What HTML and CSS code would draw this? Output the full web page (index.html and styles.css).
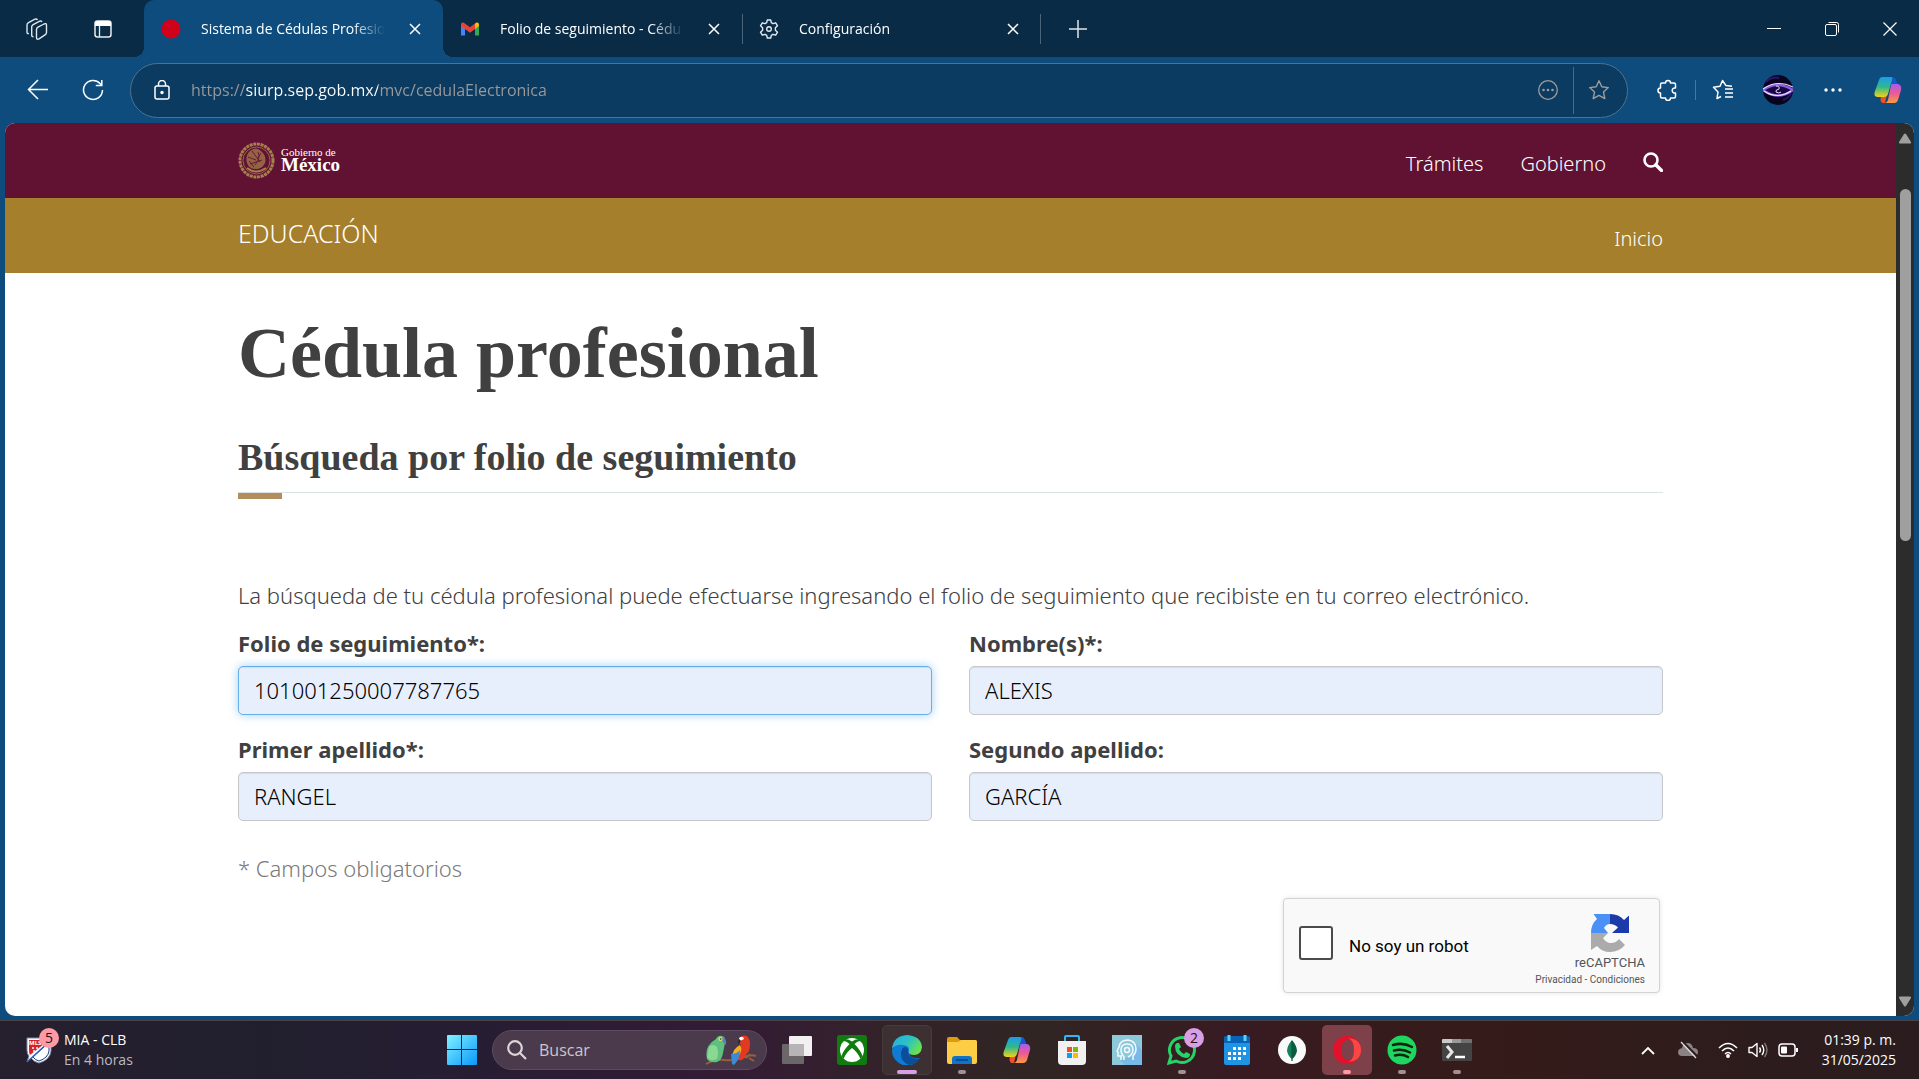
FILE: index.html
```html
<!DOCTYPE html>
<html lang="es">
<head>
<meta charset="utf-8">
<title>Sistema de Cédulas Profesionales</title>
<link rel="stylesheet" href="styles.css">
</head>
<body>
<div class="browser">
  <header class="tabstrip">
    <div class="tabstrip-tools">
      <button class="icon-btn" aria-label="Áreas de trabajo"><svg width="22" height="24" viewBox="0 0 22 24" fill="none" stroke="#dfe6ec" stroke-width="1.400" stroke-linejoin="round"><path d="M10.500 12.500q0-1.500 1.500-2.300l6-3.200q2.500-1 2.500 1v7.500q0 1.500-1.500 2.300l-6 4q-2.500 1.200-2.500-1z"/><path d="M7.500 19.500q-1.800.5-1.800-1.500v-8q0-1.500 1.500-2.300l6.500-3.500q1.500-.6 2.300.8M3 16.500Q1 17 1 15V8q0-1.500 1.500-2.300L9 2.200q1.500-.8 2.500.8"/></svg></button>
      <button class="icon-btn" aria-label="Acciones de pestañas"><svg width="20" height="20" viewBox="0 0 20 20"><rect x="2" y="2" width="16" height="16" rx="2.500" fill="none" stroke="#e8edf1" stroke-width="1.500"/><path d="M2 7V4q0-2 2-2h12q2 0 2 2v3z" fill="#fff"/><path d="M6.500 7v11" stroke="#e8edf1" stroke-width="1.300"/></svg></button>
    </div>
    <div class="tab tab-active">
      <svg width="20" height="20" viewBox="0 0 20 20"><circle cx="10" cy="10" r="9.500" fill="#d0021b"/></svg>
      <button class="tab-label">Sistema de Cédulas Profesio</button>
      <button class="close" aria-label="Cerrar pestaña"><svg width="12" height="12" viewBox="0 0 12 12" stroke="#fff" stroke-width="1.500"><path d="M1 1l10 10M11 1L1 11"/></svg></button>
    </div>
    <div class="tab">
      <svg width="20" height="20" viewBox="0 0 20 20"><path d="M1 5v11.500h4V9z" fill="#4285f4"/><path d="M19 5v11.500h-4V9z" fill="#34a853"/><path d="M15 4.500l1.500-1q2.500-.5 2.500 2V7l-4 3z" fill="#fbbc04"/><path d="M1 7V5.500q0-2.500 2.500-2L10 8.300l5-3.800V10l-5 3.800L5 10z" fill="#ea4335"/></svg>
      <button class="tab-label">Folio de seguimiento - Cédu</button>
      <button class="close" aria-label="Cerrar pestaña"><svg width="12" height="12" viewBox="0 0 12 12" stroke="#fff" stroke-width="1.500"><path d="M1 1l10 10M11 1L1 11"/></svg></button>
    </div>
    <div class="tab tab-line">
      <svg width="20" height="20" viewBox="0 0 20 20" fill="none" stroke="#e3e9ee" stroke-width="1.400" stroke-linejoin="round"><path d="M8.300 1h3.400l.6 2.700 1.700 1 2.700-.9 1.800 3-2.100 1.900v2.600l2.100 1.900-1.800 3-2.700-.9-1.700 1-.6 2.700H8.300l-.6-2.700-1.700-1-2.700.9-1.800-3 2.100-1.900V8.700L1.500 6.800l1.800-3 2.700.9 1.700-1z"/><circle cx="10" cy="10" r="2.300"/></svg>
      <button class="tab-label">Configuración</button>
      <button class="close" aria-label="Cerrar pestaña"><svg width="12" height="12" viewBox="0 0 12 12" stroke="#fff" stroke-width="1.500"><path d="M1 1l10 10M11 1L1 11"/></svg></button>
    </div>
    <div class="newtab"><button class="icon-btn" aria-label="Nueva pestaña"><svg width="18" height="18" viewBox="0 0 18 18" stroke="#dfe6ec" stroke-width="1.500"><path d="M9 0v18M0 9h18"/></svg></button></div>
    <div class="window-controls">
      <button aria-label="Minimizar"><svg width="14" height="14" viewBox="0 0 14 14" stroke="#fff"><path d="M0 6.500h14"/></svg></button>
      <button aria-label="Restaurar"><svg width="14" height="14" viewBox="0 0 14 14" fill="none" stroke="#fff"><rect x=".5" y="2.500" width="11" height="11" rx="1.500"/><path d="M3.500.5h8q2 0 2 2v8"/></svg></button>
      <button aria-label="Cerrar"><svg width="14" height="14" viewBox="0 0 14 14" stroke="#fff" stroke-width="1.200"><path d="M.5.5l13 13M13.500.5l-13 13"/></svg></button>
    </div>
  </header>

  <div class="toolbar">
    <button class="icon-btn" aria-label="Atrás"><svg width="22" height="22" viewBox="0 0 22 22" fill="none" stroke="#fff" stroke-width="1.500"><path d="M21 10.500H1.500M11 1l-9.500 9.500L11 20"/></svg></button>
    <button class="icon-btn" aria-label="Actualizar"><svg width="22" height="22" viewBox="0 0 22 22" fill="none" stroke="#fff" stroke-width="1.500"><path d="M20.500 11a9.500 9.500 0 1 1-2.500-6.500l1.500 1.500M19.800 1v5.500h-6"/></svg></button>
    <div class="address">
      <svg width="16" height="20" viewBox="0 0 16 20" fill="none" stroke="#fff" stroke-width="1.500"><rect x="1" y="6" width="14" height="13" rx="2"/><path d="M4.500 6V4a3.500 3.500 0 0 1 7 0v2"/><circle cx="8" cy="12.500" r="1" fill="#fff"/></svg>
      <input class="url" type="text" aria-label="Barra de direcciones" value="https://siurp.sep.gob.mx/mvc/cedulaElectronica">
      <button class="icon-btn" aria-label="Más acciones"><svg width="20" height="20" viewBox="0 0 20 20" fill="none" stroke="#a09c9b" stroke-width="1.300"><circle cx="10" cy="10" r="9.300"/><g fill="#a09c9b" stroke="none"><circle cx="5.500" cy="10" r="1.300"/><circle cx="10" cy="10" r="1.300"/><circle cx="14.500" cy="10" r="1.300"/></g></svg></button>
      <span class="address-rule"></span>
      <button class="icon-btn" aria-label="Agregar a favoritos"><svg width="22" height="22" viewBox="0 0 22 22" fill="none" stroke="#a09c9b" stroke-width="1.400" stroke-linejoin="round"><path d="M11 1.800l2.800 6 6.500.8-4.800 4.500 1.300 6.500L11 16.400l-5.800 3.200 1.300-6.500L1.700 8.600l6.500-.8z"/></svg></button>
    </div>
    <div class="toolbar-end">
      <button class="icon-btn" aria-label="Extensiones"><svg width="22" height="22" viewBox="0 0 22 22" fill="none" stroke="#fff" stroke-width="1.500" stroke-linejoin="round"><path d="M5 4h3.500a2.500 2.500 0 0 1 5 0H17q1.500 0 1.500 1.500V9a2.600 2.600 0 1 0 0 5v3.500q0 1.500-1.500 1.500h-3.500a2.500 2.500 0 0 1-5 0H5q-1.500 0-1.500-1.500V14a2.500 2.500 0 0 1 0-5V5.500Q3.500 4 5 4z"/></svg></button>
      <span class="toolbar-rule"></span>
      <button class="icon-btn" aria-label="Favoritos"><svg width="22" height="22" viewBox="0 0 22 22" fill="none" stroke="#fff" stroke-width="1.500" stroke-linejoin="round"><path d="M20 7.300l-6-.7L10.500 1.500 8 7.300l-6.500 1L6 13l-1 6.500 4-2"/><path d="M13 10h8M13 14h8M13 18h8"/></svg></button>
      <button class="icon-btn avatar-btn" aria-label="Perfil"><svg width="30" height="30" viewBox="0 0 30 30"><circle cx="15" cy="15" r="15" fill="#080420"/><path d="M3 7q6-6 13-4M20 25q6-2 8-7" stroke="#2a1470" stroke-width="2" fill="none"/><path d="M0 15q14-10 30 0Q15 26 0 15z" fill="#140a40" stroke="#8f5be6" stroke-width="2.400"/><path d="M0 14q14-10 30-2M1 16q13 9 27 0" fill="none" stroke="#efe2ff" stroke-width="1.100"/><path d="M13 11q4 0 3 3-4 1-3 3 3 2 5 0" stroke="#e8dcff" fill="none"/></svg></button>
      <button class="icon-btn" aria-label="Configuración y más"><svg width="18" height="4" viewBox="0 0 18 4" fill="#fff"><circle cx="2" cy="2" r="1.700"/><circle cx="9" cy="2" r="1.700"/><circle cx="16" cy="2" r="1.700"/></svg></button>
      <button class="icon-btn" aria-label="Copilot"><svg width="28" height="28" viewBox="0 0 28 28"><use href="#copilot"/></svg></button>
    </div>
  </div>

  <div class="viewport">
    <div class="page">
      <nav class="gob-bar">
        <div class="container">
          <a class="brand" href="#">
            <svg width="37" height="37" viewBox="0 0 37 37" fill="none" stroke="#a57f4c"><circle cx="18.500" cy="18.500" r="16.500" stroke-width="3" stroke-dasharray="3 .7"/><circle cx="18.500" cy="18.500" r="13.500" stroke-width=".8"/><path d="M12 9q6-5 11 0 6 5 4 12-3 6-9 6-7 0-9-6-2-7 3-12z" fill="#a57f4c" fill-opacity=".75" stroke="none"/><path d="M14 9l8 11M20 10q3 6-3 13M10 15l8 3M12 22l12-4M23 11l-3 5M11 19l5 6" stroke="#611232" stroke-width=".9"/><path d="M9 26q9 7 19 0" stroke-width="2"/></svg>
            <span class="brand-text"><small>Gobierno de</small><strong>México</strong></span>
          </a>
          <div class="gob-links">
            <a href="#">Trámites</a>
            <a href="#">Gobierno</a>
            <a class="gob-search" href="#" aria-label="Buscar"><svg width="20" height="20" viewBox="0 0 20 20" fill="none" stroke="#fff"><circle cx="8" cy="8" r="6.500" stroke-width="2.600"/><path d="M13 13l5.500 5.500" stroke-width="3.400" stroke-linecap="round"/></svg></a>
          </div>
        </div>
      </nav>
      <nav class="edu-bar">
        <div class="container">
          <a class="edu-name" href="#">EDUCACIÓN</a>
          <a class="edu-home" href="#">Inicio</a>
        </div>
      </nav>
      <main class="container content">
        <h1>Cédula profesional</h1>
        <h2>Búsqueda por folio de seguimiento</h2>
        <div class="accent"></div>
        <p class="intro">La búsqueda de tu cédula profesional puede efectuarse ingresando el folio de seguimiento que recibiste en tu correo electrónico.</p>
        <form class="form">
          <div class="field"><label for="folio">Folio de seguimiento*:</label><input class="is-focused" id="folio" type="text" value="101001250007787765"></div>
          <div class="field"><label for="nombre">Nombre(s)*:</label><input id="nombre" type="text" value="ALEXIS"></div>
          <div class="field"><label for="primer">Primer apellido*:</label><input id="primer" type="text" value="RANGEL"></div>
          <div class="field"><label for="segundo">Segundo apellido:</label><input id="segundo" type="text" value="GARCÍA"></div>
        </form>
        <p class="required">* Campos obligatorios</p>
        <div class="captcha">
          <input type="checkbox" id="robot"><label for="robot">No soy un robot</label>
          <div class="captcha-brand">
            <svg width="40" height="40" viewBox="0 0 40 40"><path d="M20 1v10q-4 0-6 4l4 5H1Q1 11 7 6L3.500 1z" fill="#4a90f5"/><path d="M20 1q9 0 14 6l5-4.500V20H22l6-5.500Q25 11 20 11z" fill="#1c3aa9"/><path d="M1 20h17l-5 5q3 5 8 5 5 0 8-4l6 6q-6 7-15 7-8 0-13-6l-6 4z" fill="#ababab"/></svg>
            <span class="captcha-name">reCAPTCHA</span>
            <span class="captcha-legal"><a href="#">Privacidad</a> - <a href="#">Condiciones</a></span>
          </div>
        </div>
      </main>
    </div>
    <div class="scrollbar" aria-hidden="true">
      <svg width="14" height="11" viewBox="0 0 14 11" fill="#9f9f9f"><path d="M6 1q1-1 2 0l5 8q.5 1.500-1 1.500H2Q.5 10.500 1 9z"/></svg>
      <div class="scroll-track"><div class="scroll-thumb"></div></div>
      <svg width="14" height="11" viewBox="0 0 14 11" fill="#9f9f9f"><path d="M6 10q1 1 2 0l5-8q.5-1.500-1-1.500H2Q.5.5 1 2z"/></svg>
    </div>
  </div>
</div>

<footer class="taskbar">
  <button class="widget">
    <span class="widget-icon">
      <svg width="28" height="28" viewBox="0 0 28 28"><path d="M1 2h24v13q-1 9-12 12Q8 26 5 22l-4 4 2-6Q1 18 1 14z" fill="#fff" stroke="#7c89a8"/><path d="M3 4h20L4 19Q3 17 3 14z" fill="#d8202c"/><path d="M23 6v9q-1 7-10 10-4-1-6-4z" fill="#fff" stroke="#1d3c78"/><path d="M1 26L24 5" stroke="#2a63ad" stroke-width="1.500"/><g fill="#fff"><circle cx="7" cy="12" r="1"/><circle cx="11" cy="12" r="1"/><circle cx="8" cy="15" r="1"/></g><text x="3" y="9" font-family="Open Sans, sans-serif" font-size="6" font-weight="700" fill="#fff">MLS</text></svg>
      <span class="badge badge-pink">5</span>
    </span>
    <span class="widget-text"><span>MIA - CLB</span><span class="muted">En 4 horas</span></span>
  </button>

  <div class="apps">
    <button class="app" aria-label="Inicio"><svg width="30" height="30" viewBox="0 0 30 30"><defs><linearGradient id="win" gradientUnits="userSpaceOnUse" x1="0" y1="0" x2="30" y2="30"><stop stop-color="#80f2ff"/><stop offset="1" stop-color="#0a98fb"/></linearGradient></defs><path d="M1 0h13v14H0V1q0-1 1-1zM15 0h14q1 0 1 1v13H15zM0 15h14v15H1q-1 0-1-1zM15 15h15v14q0 1-1 1H15z" fill="url(#win)"/></svg></button>
    <label class="search">
      <svg width="20" height="20" viewBox="0 0 20 20" fill="none" stroke="#ddd5da" stroke-width="2.200"><circle cx="8" cy="8" r="6.800"/><path d="M13 13l6 6"/></svg>
      <input type="text" placeholder="Buscar" aria-label="Buscar">
      <svg width="52" height="32" viewBox="0 0 52 32"><path d="M1 30q9-5 18-4 10 1 18-2 8-4 14-2M41 24l4-4M44 24l5 3" stroke="#9a5d40" stroke-width="2" fill="none"/><path d="M11 5q2-4 6-3 4 1 3 7-1 5-2 10-1 7-6 9-7 1-10-3-3-13 9-20z" fill="#5fbf80"/><path d="M4 13q4-4 8 0 2 6 0 12-7 3-10-2z" fill="#8bd893"/><path d="M17 3q5 1 4 8-3-2-4-5z" fill="#5882b8"/><circle cx="15.500" cy="5" r="2" fill="#f6dc4f"/><circle cx="15.700" cy="5" r=".8" fill="#222"/><path d="M34 5q3-5 8-3 5 5 2 15l-7 9q-5 1-5-3 0-7 4-11z" fill="#e23a20"/><path d="M35 11q3 5-1 10l-7 3q0-9 8-13z" fill="#f2ae24"/><path d="M26 20q6 0 9-4 0 9-6 15l-2-1z" fill="#3a8ad6"/><path d="M34 4q4-3 5 1l-4 2z" fill="#fff"/><path d="M34 5l-1 5 3-3z" fill="#222"/></svg>
    </label>
    <button class="app" aria-label="Vista de tareas"><svg width="30" height="28" viewBox="0 0 30 28"><rect x="7" y="0" width="23" height="20" rx="1" fill="#f2f0f0"/><rect x="0" y="8" width="22" height="20" rx="1" fill="#6b6768"/><path d="M7 8h15v12H7z" fill="#b7b4b5"/></svg></button>
    <button class="app" aria-label="Xbox"><svg width="30" height="30" viewBox="0 0 30 30"><rect width="30" height="30" rx="3" fill="#107c10"/><circle cx="15" cy="15" r="12" fill="#fff"/><path d="M7 4.500q4-1 8 2 4-3 8-2l1 1.500q-3-.5-6.500 3 6 6 8 12l-2 3q-3-7-8.500-11-5.500 4-8.500 11l-2-3q2-6 8-12Q9 5.500 6 6z" fill="#107c10"/></svg></button>
    <button class="app app-open app-current" aria-label="Microsoft Edge"><svg width="30" height="30" viewBox="0 0 30 30"><defs><linearGradient id="edge" x1="0" y1="0" x2="1" y2=".6"><stop stop-color="#28a8ea"/><stop offset=".55" stop-color="#2cc3c0"/><stop offset="1" stop-color="#6be34c"/></linearGradient></defs><path d="M0 15a15 15 0 0 1 19-8l-2 12q2 4 7 4l4 0a15 15 0 0 1-28-8z" fill="#0f7bd4"/><path d="M0 14Q1 1 15 0q14 1 15 12-1 8-8 8-6 0-5-4 1-6-6-6Q4 9 0 14z" fill="url(#edge)"/><path d="M10 14q-4 11 7 16 7 0 11-7-5 2-9-1-4-3-3-8-3-4-6 0z" fill="#0c4d98"/></svg></button>
    <button class="app app-open" aria-label="Explorador de archivos"><svg width="30" height="30" viewBox="0 0 30 30"><path d="M0 4q0-2 2-2h8l3 3h15q2 0 2 2v8H0z" fill="#dc9c0e"/><path d="M0 7h11l3-2h14q2 0 2 2v20q0 2-2 2H2q-2 0-2-2z" fill="#fdcd45"/><path d="M5 29v-5q0-3 3-3h14q3 0 3 3v5z" fill="#1272c6"/><path d="M9 25h12" stroke="#0a4d92" stroke-width="2"/></svg></button>
    <button class="app" aria-label="Copilot"><svg width="28" height="28" viewBox="0 0 28 28"><defs><linearGradient id="cpA" x1="0" y1="0" x2="0" y2="1"><stop stop-color="#1b9bf0"/><stop offset=".5" stop-color="#2fb98a"/><stop offset="1" stop-color="#f4d316"/></linearGradient><linearGradient id="cpB" x1="0" y1="0" x2="0" y2="1"><stop stop-color="#a65cf0"/><stop offset=".5" stop-color="#ee5a92"/><stop offset="1" stop-color="#fb9a3f"/></linearGradient><g id="copilot"><path d="M16 1h3q2 0 3 3l2 6h-7z" fill="#1757c9"/><path d="M7 19l6-1-2 9H9q-2 0-2.500-3z" fill="#f0512b"/><path d="M8 1h9q2 0 1 3l-4 14q-1 3-4 3H4q-5 0-3-6L5 4q1-3 3-3z" fill="url(#cpA)"/><path d="M18 8h6q4 1 3 6l-3 10q-1 3-4 3h-9q2 0 3-3l2-10q1-6 2-6z" fill="url(#cpB)"/></g></defs><use href="#copilot"/></svg></button>
    <button class="app" aria-label="Microsoft Store"><svg width="30" height="32" viewBox="0 0 30 32"><path d="M8 8V3q0-1 1-1h12q1 0 1 1v5" fill="none" stroke="#35b6ef" stroke-width="2"/><path d="M1 7h28v20q0 4-4 4H5q-4 0-4-4z" fill="#f1f1f1"/><path d="M10 13h5v5h-5z" fill="#f25022"/><path d="M16 13h5v5h-5z" fill="#7fba00"/><path d="M10 19h5v5h-5z" fill="#00a4ef"/><path d="M16 19h5v5h-5z" fill="#ffb900"/></svg></button>
    <button class="app" aria-label="Asistente"><svg width="30" height="30" viewBox="0 0 30 30"><rect width="30" height="30" fill="#8ec9da"/><path d="M8 25l5 5h17V15l-8-8v13z" fill="#78b9e8"/><g fill="none" stroke="#f2fbff" stroke-width="1.500"><path d="M9 25v-4H6v-4l-1-1 2-4Q8 5 16 5q8 1 8 9 0 4-3 7v4"/><path d="M12 25v-3q-3-3-3-7 0-6 6-6t6 6q0 3-3 6l-2 1"/><circle cx="15" cy="15" r="2.500"/></g></svg></button>
    <button class="app app-open" aria-label="WhatsApp"><svg width="30" height="30" viewBox="0 0 30 30"><path d="M2 28l2-7a12.500 12.500 0 1 1 5 5z" fill="none" stroke="#25d366" stroke-width="3"/><path d="M10 8h2l2 4-2 2q2 4 5 5l2-2 4 2q0 4-4 4Q8 21 8 11q0-2 2-3z" fill="#25d366"/></svg><span class="badge badge-purple">2</span></button>
    <button class="app" aria-label="Calendario"><svg width="26" height="32" viewBox="0 0 26 32"><rect y="3" width="26" height="28" rx="2" fill="#1f93e4"/><path d="M0 9V4q0-2 2-2h22q2 0 2 2v5z" fill="#0b63b8"/><path d="M5 1v6M21 1v6" stroke="#5ad0fa" stroke-width="3"/><path d="M9 14.500h13M4 19.500h18M4 24.500h13" stroke="#fff" stroke-width="3" stroke-dasharray="3 2"/></svg></button>
    <button class="app" aria-label="MongoDB Compass"><svg width="28" height="28" viewBox="0 0 28 28"><circle cx="14" cy="14" r="14" fill="#fafafa"/><path d="M14 4q-5 6-5 11 1 5 5 8z" fill="#13805a"/><path d="M14 4q5 6 5 11-1 5-5 8z" fill="#085b45"/><path d="M14 5v20" stroke="#0b5b38" stroke-width="1.200"/></svg></button>
    <button class="app app-open app-alert" aria-label="Opera"><svg width="30" height="30" viewBox="0 0 30 30"><path fill-rule="evenodd" d="M15 1a14 14 0 1 0 0 28 14 14 0 1 0 0-28zm1 4c4 0 6 4 6 10s-2 10-6 10-7-4-7-10 3-10 7-10z" fill="#e3122a"/><path fill-rule="evenodd" d="M16 3q13 1 13 12T16 27q6-2 6-12T16 3z" fill="#fb4646"/></svg></button>
    <button class="app app-open" aria-label="Spotify"><svg width="30" height="30" viewBox="0 0 30 30"><circle cx="15" cy="15" r="14.500" fill="#1ed760"/><path d="M6 10q10-3 19 2M7 15.500q9-2 16 2M8 20.500q7-2 13 1.500" fill="none" stroke="#12230f" stroke-width="2.500" stroke-linecap="round"/></svg></button>
    <button class="app app-open" aria-label="Terminal"><svg width="30" height="22" viewBox="0 0 30 22"><rect width="30" height="22" rx="1" fill="#444"/><path d="M1 0h9v4H0V1q0-1 1-1z" fill="#c9c9c9"/><path d="M10 0h9v4h-9z" fill="#9a9a9a"/><path d="M19 0h10q1 0 1 1v3H19z" fill="#707070"/><path d="M5 7l5 6-5 6" fill="none" stroke="#e6e6e6" stroke-width="3"/><path d="M13 18h10" stroke="#fff" stroke-width="2.500"/></svg></button>
  </div>

  <div class="tray">
    <button aria-label="Mostrar iconos ocultos"><svg width="14" height="9" viewBox="0 0 14 9" fill="none" stroke="#fff" stroke-width="1.800"><path d="M1 8l6-6 6 6"/></svg></button>
    <button class="tray-cloud" aria-label="OneDrive"><svg width="20" height="18" viewBox="0 0 20 18"><path d="M4 15q-4 0-4-4 0-3 4-4 1-5 6-5 4 0 5 5 5 0 5 4t-4 4z" fill="#8b8283"/><path d="M4 0l15 15" stroke="#2b1b1d" stroke-width="2"/><path d="M3 1l15 16" stroke="#ddd" stroke-width="1.300"/></svg></button>
    <button class="tray-net" aria-label="Red, volumen y batería">
      <svg width="20" height="16" viewBox="0 0 20 16" fill="none" stroke="#fff" stroke-width="1.500"><path d="M1 6q9-9 18 0M4 9q6-6 12 0M7 12q3-3 6 0"/><circle cx="10" cy="14" r="1.200" fill="#fff"/></svg>
      <svg width="20" height="16" viewBox="0 0 20 16" fill="none" stroke="#fff" stroke-width="1.400" stroke-linejoin="round"><path d="M1 5.500h3L9 1.500v13l-5-4H1zM11.500 5.500q2 2.500 0 5M14 3q3.500 5 0 10"/><path d="M16.500 1q5 7 0 14" stroke="#837476"/></svg>
      <svg width="20" height="14" viewBox="0 0 20 14" fill="none" stroke="#fff" stroke-width="1.500"><rect x="1" y="1" width="16" height="12" rx="3"/><path d="M19 5v4" stroke-width="2"/><rect x="3" y="3.500" width="6" height="7" rx="1" fill="#fff" stroke="none"/></svg>
    </button>
    <button class="clock"><span>01:39 p. m.</span><span>31/05/2025</span></button>
  </div>
</footer>
</body>
</html>
```
FILE: styles.css
```css
* { box-sizing: border-box; }

body {
  margin: 0;
  min-height: 100vh;
  display: flex;
  flex-direction: column;
  font-family: "Noto Sans", sans-serif;
  color: #404041;
}

button {
  margin: 0;
  padding: 0;
  border: 0;
  background: none;
  color: inherit;
  font: inherit;
}

svg { display: block; flex: none; }
a { color: inherit; text-decoration: none; }
h1, h2, p { margin: 0; }

/* Browser window */
.browser {
  flex: 1;
  display: flex;
  flex-direction: column;
  background: #0d4c7c;
  padding-bottom: 4px;
}

.tabstrip, .toolbar, .taskbar { font-family: "Open Sans", sans-serif; }

.tabstrip {
  display: flex;
  height: 57px;
  background: #092b45;
  color: #fff;
  font-size: 14px;
}

.tabstrip-tools {
  width: 144px;
  display: flex;
  align-items: center;
  padding-left: 17px;
  gap: 26px;
}

.icon-btn {
  width: 40px;
  height: 40px;
  flex: none;
  display: grid;
  place-items: center;
}

.tab {
  width: 299px;
  display: flex;
  align-items: center;
  padding: 0 22px 0 17px;
  gap: 20px;
}

.tab-active {
  position: relative;
  background: #0d4c7c;
  border-radius: 10px 10px 0 0;
}

/* Flared feet where the active tab meets the toolbar */
.tab-active::before, .tab-active::after {
  content: "";
  position: absolute;
  bottom: 0;
  width: 10px;
  height: 10px;
}
.tab-active::before { left: -10px; background: radial-gradient(circle at 0 0, transparent 10px, #0d4c7c 10px); }
.tab-active::after { right: -10px; background: radial-gradient(circle at 100% 0, transparent 10px, #0d4c7c 10px); }

.tab-line {
  position: relative;
}
.tab-line::before, .tab-line::after {
  content: "";
  position: absolute;
  top: 14px;
  width: 1px;
  height: 30px;
  background: #4a6579;
}
.tab-line::before { left: 0; }
.tab-line::after { right: 0; }

.tab-label {
  flex: 1;
  min-width: 0;
  white-space: nowrap;
  text-align: left;
  mask-image: linear-gradient(to right, #000 80%, transparent 98%);
}

.close { display: grid; place-items: center; width: 12px; height: 20px; }
.newtab { display: flex; align-items: center; padding-left: 17px; }
.window-controls { display: flex; margin-left: auto; }
.window-controls button { width: 58px; display: grid; place-items: center; }

.toolbar {
  display: flex;
  align-items: center;
  height: 66px;
  padding: 0 11px 0 18px;
  gap: 15px;
}

.address {
  flex: 1;
  display: flex;
  align-items: center;
  height: 55px;
  margin-left: 2px;
  padding: 0 8px 0 23px;
  border: 1px solid #4d7391;
  border-radius: 28px;
  background: #0b3b60;
}

/* The host name reads brighter than the rest of the address */
.url {
  flex: 1;
  min-width: 0;
  margin-left: 21px;
  padding: 0;
  border: 0;
  outline: 0;
  font: 16px/24px "Open Sans", sans-serif;
  color: transparent;
  background: linear-gradient(to right, #9a9a9b 55px, #fff 55px, #fff 187px, #9a9a9b 187px);
  background-clip: text;
}

.address-rule { width: 1px; height: 47px; margin: 0 5px; background: #55687a; }
.toolbar-end { display: flex; align-items: center; gap: 15px; margin-left: 5px; }
.toolbar-rule { width: 1px; height: 20px; margin: 0 -8px; background: #4b7799; }

/* Web page area */
.viewport {
  flex: 1;
  display: flex;
  margin: 0 5px;
  border-radius: 10px;
  overflow: hidden;
  background: #fff;
}

.page { flex: 1; min-width: 0; }

.scrollbar {
  width: 18px;
  display: flex;
  flex-direction: column;
  align-items: center;
  gap: 6px;
  padding: 10px 0 9px;
  background: #2c2c2c;
}
.scroll-track { flex: 1; padding-top: 39px; }
.scroll-thumb { width: 11px; height: 352px; border-radius: 6px; background: #9f9f9f; }

.container {
  max-width: 1425px;
  margin: 0 auto;
}

.gob-bar { background: #611232; color: #fff; font-size: 20px; }
.gob-bar .container, .edu-bar .container {
  display: flex;
  justify-content: space-between;
  align-items: center;
  height: 75px;
}
.brand { display: flex; align-items: center; gap: 6px; }
.brand-text { display: flex; flex-direction: column; font-family: "Liberation Serif", serif; }
.brand-text small { font-size: 11px; line-height: 9px; }
.brand-text strong { font-size: 19px; line-height: 16px; }
.gob-links { display: flex; align-items: center; gap: 37px; padding-top: 6px; font-weight: 300; }
.gob-search { padding-bottom: 4px; }

.edu-bar { background: #a57f2c; color: #fff; font-weight: 300; }
.edu-name { font-size: 25px; line-height: 32px; padding-bottom: 6px; }
.edu-home { font-size: 20px; line-height: 32px; padding-top: 6px; }

.content { padding-top: 40px; font-size: 22px; line-height: 32px; }

h1, h2 { font-family: "Liberation Serif", serif; font-weight: 700; }
h1 { font-size: 72px; line-height: 80px; }
h2 {
  margin-top: 44px;
  padding-bottom: 15px;
  border-bottom: 1px solid #dde2e2;
  font-size: 38px;
  line-height: 40px;
}
.accent { width: 44px; height: 6px; background: #b38e5d; }
.intro { margin-top: 80px; font-weight: 300; }

.form {
  display: grid;
  grid-template-columns: 1fr 1fr;
  gap: 18px 37px;
  margin-top: 16px;
}
.field { display: flex; flex-direction: column; gap: 7px; }
.field label { font-weight: 700; }
.field input {
  width: 100%;
  height: 49px;
  padding: 0 15px 2px;
  border: 1px solid #c5c7ca;
  border-radius: 5px;
  background: #e8effc;
  box-shadow: inset 0 1px 1px rgba(0, 0, 0, .08);
  color: #000;
  font: 300 22px/32px "Noto Sans", sans-serif;
  outline: 0;
}
.field .is-focused {
  border-color: #66afe9;
  box-shadow: inset 0 1px 1px rgba(0, 0, 0, .08), 0 0 10px rgba(102, 175, 233, .6);
}

.required { margin-top: 31px; font-weight: 300; color: #7a7a7a; }

.captcha {
  display: flex;
  align-items: center;
  width: 377px;
  height: 95px;
  margin: 14px 3px 20px auto;
  padding: 0 14px 0 15px;
  border: 1px solid #d3d3d3;
  border-radius: 4px;
  background: #f9f9f9;
  box-shadow: 0 0 5px rgba(0, 0, 0, .1);
  font: 17px/24px Roboto, sans-serif;
  color: #000;
}
.captcha input {
  appearance: none;
  width: 34px;
  height: 34px;
  margin: 0 16px 6px 0;
  border: 2px solid #4c4a4b;
  border-radius: 3px;
  background: #fff;
}
.captcha-brand {
  margin-left: auto;
  padding-top: 8px;
  display: flex;
  flex-direction: column;
  align-items: flex-end;
  color: #555;
}
.captcha-brand svg { margin-right: 15px; }
.captcha-name { font-size: 13px; line-height: 20px; }
.captcha-legal { font-size: 10px; line-height: 14px; }

/* Windows taskbar */
.taskbar {
  display: grid;
  grid-template-columns: 1fr auto 1fr;
  align-items: center;
  height: 59px;
  border-top: 1px solid #4b4145;
  background: linear-gradient(to right, #261f2e 0%, #211f2e 14%, #271d33 25%, #341b35 38%, #33222a 46%, #302523 54%, #381b22 64%, #351b19 78%, #2f1c1c 88%, #2a1c1f 100%);
  color: #fff;
  font-size: 14px;
  line-height: 20px;
}

.widget { display: flex; align-items: center; gap: 10px; padding-left: 26px; text-align: left; }
.widget-icon { position: relative; }
.widget-text { display: flex; flex-direction: column; }
.muted { color: #bdb9c0; }

.badge {
  position: absolute;
  display: grid;
  place-items: center;
  width: 20px;
  height: 20px;
  border-radius: 10px;
  color: #1c1416;
  font-size: 14px;
  line-height: 20px;
}
.badge-pink { right: -5px; top: -8px; background: #ff99a4; }
.badge-purple { right: 3px; top: 3px; background: #d89fe6; }

.apps { display: flex; align-items: center; gap: 5px; }
.app {
  position: relative;
  display: grid;
  place-items: center;
  width: 50px;
  height: 50px;
  border-radius: 5px;
}
.app-open::after {
  content: "";
  position: absolute;
  left: 21px;
  bottom: 1px;
  width: 8px;
  height: 4px;
  border-radius: 2px;
  background: #a09294;
}
.app-current { background: #3c3032; border: 1px solid #463b3d; }
.app-current::after { left: 14px; bottom: 0; width: 20px; background: #d89fe6; }
.app-alert { background: #7e4149; }
.app-alert::after { background: #ff99a4; }

.search {
  display: flex;
  align-items: center;
  width: 275px;
  height: 40px;
  padding: 0 9px 0 14px;
  gap: 12px;
  border: 1px solid #5d4c5f;
  border-radius: 20px;
  background: #4a3a4b;
}
.search input {
  flex: 1;
  min-width: 0;
  padding: 0;
  border: 0;
  outline: 0;
  background: none;
  font: 16px/24px "Open Sans", sans-serif;
}
.search input::placeholder { color: #cfc6cd; opacity: 1; }

.tray { display: flex; align-items: center; justify-content: flex-end; padding-right: 23px; }
.tray-cloud { margin-left: 23px; }
.tray-net { display: flex; align-items: center; gap: 10px; margin-left: 20px; }
.clock { display: flex; flex-direction: column; align-items: flex-end; margin-left: 24px; }
```
